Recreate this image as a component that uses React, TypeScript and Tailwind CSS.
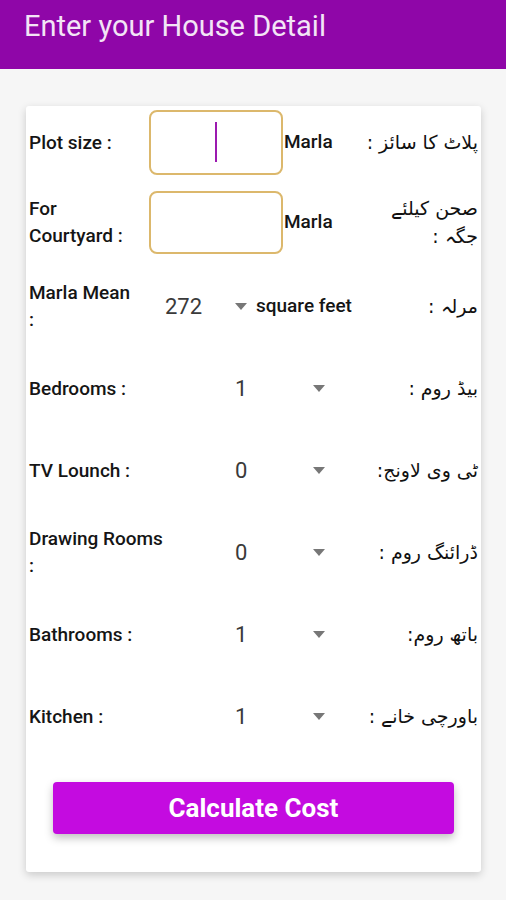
import React from "react";

const urdu = { fontFamily: '"DejaVu Sans", sans-serif' };

const Caret = () => (
  <svg width="12" height="7" viewBox="0 0 12 7" className="shrink-0">
    <path d="M0 0 L12 0 L6 7 Z" fill="#777" />
  </svg>
);

interface RowProps {
  label: React.ReactNode;
  urduLabel: React.ReactNode;
  children: React.ReactNode;
  className?: string;
}

const Row: React.FC<RowProps> = ({ label, urduLabel, children, className }) => (
  <div className={`flex items-center h-[68px] ${className ?? ""}`}>
    <div className="w-[120px] shrink-0 whitespace-nowrap text-[19px] font-medium leading-[27px] text-[#151515]">{label}</div>
    <div className="flex-1 flex items-center h-full">{children}</div>
    <div dir="rtl" className="text-[19px] leading-[28px] text-[#111] text-right shrink-0" style={urdu}>
      {urduLabel}
    </div>
  </div>
);

const rooms = [
  { label: "Bedrooms :", urdu: "بیڈ روم :", value: "1" },
  { label: "TV Lounch :", urdu: "ٹی وی لاونج:", value: "0" },
  { label: <>Drawing Rooms<br />:</>, urdu: "ڈرائنگ روم :", value: "0" },
  { label: "Bathrooms :", urdu: "باتھ روم:", value: "1" },
  { label: "Kitchen :", urdu: "باورچی خانے :", value: "1" },
];

export default function App() {
  return (
    <div className="min-h-[900px] bg-[#f6f6f6]" style={{ fontFamily: "Roboto, sans-serif" }}>
      <div className="h-[69px] bg-[#8f06a8] flex items-start pl-6 pt-[6px]">
        <h1 className="text-[29px] leading-[40px] text-[#f3e4f6]">Enter your House Detail</h1>
      </div>

      <div className="mx-[26px] mt-[37px] w-[455px] bg-white rounded-[3px] shadow-[0_3px_8px_rgba(0,0,0,0.18)] pl-[3px] pr-[3px] pt-[2px] pb-[38px]">
        <Row label="Plot size :" urduLabel="پلاٹ کا سائز :">
          <div className="w-[134px] h-[65px] border-2 border-[#dcb86c] rounded-[8px] flex items-center justify-center">
            <div className="w-[2px] h-[40px] bg-[#9c1ab0]" />
          </div>
          <span className="ml-[1px] text-[19px] font-medium text-[#151515]">Marla</span>
        </Row>

        <Row
          className="mt-3"
          label={<>For<br />Courtyard :</>}
          urduLabel={<>صحن کیلئے<br />جگہ :</>}
        >
          <div className="w-[134px] h-[63px] border-2 border-[#dcb86c] rounded-[8px]" />
          <span className="ml-[1px] text-[19px] font-medium text-[#151515]">Marla</span>
        </Row>

        <Row className="mt-4" label={<>Marla Mean<br />:</>} urduLabel="مرلہ :">
          <span className="ml-[16px] w-[70px] text-[22px] text-[#3a3a3a]">272</span>
          <Caret />
          <span className="ml-[9px] text-[19px] font-medium text-[#151515]">square feet</span>
        </Row>

        {rooms.map((r, i) => (
          <Row key={i} className="mt-[14px]" label={r.label} urduLabel={r.urdu}>
            <span className="ml-[86px] w-[78px] text-[22px] text-[#3a3a3a]">{r.value}</span>
            <Caret />
          </Row>
        ))}

        <div className="mt-[32px] flex justify-center">
          <button className="w-[401px] h-[52px] rounded-[4px] bg-[#c40be0] text-white text-[26px] font-bold shadow-[0_4px_8px_rgba(0,0,0,0.25)]">
            Calculate Cost
          </button>
        </div>
      </div>
    </div>
  );
}
